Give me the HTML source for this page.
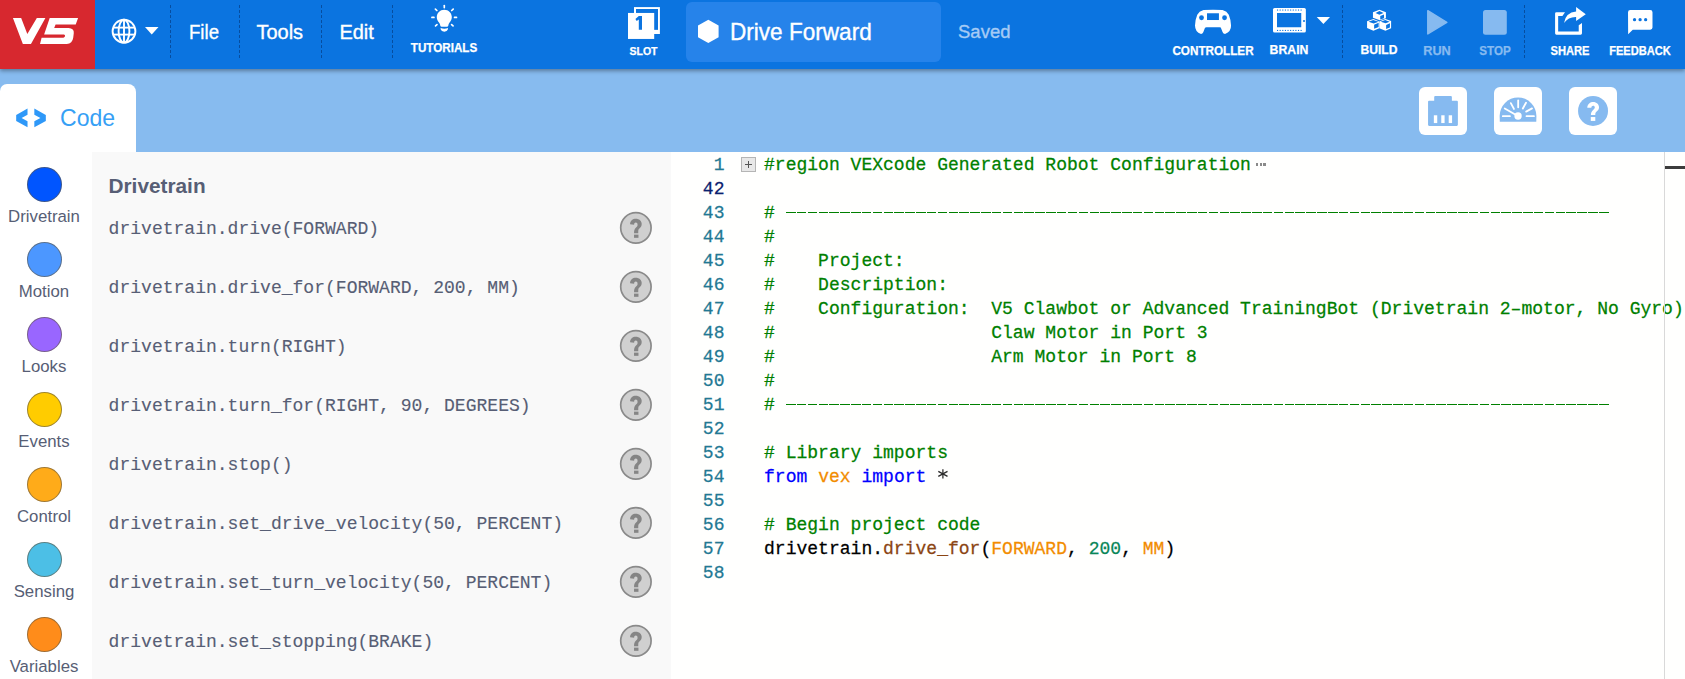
<!DOCTYPE html>
<html><head><meta charset="utf-8"><title>VEXcode V5</title>
<style>
html,body{margin:0;padding:0;width:1685px;height:679px;overflow:hidden;background:#fff;font-family:'Liberation Sans', sans-serif;}
.t{position:absolute;white-space:pre;}
.m{-webkit-text-stroke-width:0.25px;}
.m2{-webkit-text-stroke-width:0.12px;}
.b3{-webkit-text-stroke-width:0.35px;}
.b2{-webkit-text-stroke-width:0.25px;}
</style></head><body>
<div id="topbar" style="position:absolute;left:0;top:0;width:1685px;height:69px;background:#0b74e0;box-shadow:0 2px 4px rgba(0,0,0,0.35);z-index:3">
<div style="position:absolute;left:0;top:0;width:95px;height:69px;background:#d7282f"></div>
<svg style="position:absolute;left:8px;top:12px" width="80" height="38" viewBox="0 0 1429 679"><path fill="#fff" d="M88 105 L235 105 L345 395 L515 105 L668 105 L410 572 L265 572 Z"/><path fill="#fff" d="M745 105 L1252 105 L1210 225 L850 225 L825 285 L1080 285 Q1185 290 1175 380 L1165 460 Q1150 565 1050 572 L572 572 L600 460 L990 460 Q1015 455 1020 430 Q1020 400 1000 400 L645 400 Z"/></svg>
<svg style="position:absolute;left:110px;top:17px" width="30" height="30" viewBox="0 0 30 30"><g fill="none" stroke="#fff" stroke-width="1.9"><circle cx="14.0" cy="14.2" r="11.4"/><ellipse cx="14.0" cy="14.2" rx="5.4" ry="11.4"/><line x1="14.0" y1="2.8" x2="14.0" y2="25.6"/><line x1="3.2" y1="10.6" x2="24.8" y2="10.6"/><line x1="3.2" y1="17.6" x2="24.8" y2="17.6"/></g></svg>
<svg style="position:absolute;left:144px;top:26px" width="16" height="10" viewBox="0 0 16 10"><path fill="#fff" d="M1 1 L14.5 1 L7.75 8.5 Z"/></svg>
<div style="position:absolute;left:170px;top:5px;width:0;height:53px;border-left:1px dashed rgba(0,30,80,0.45)"></div>
<div style="position:absolute;left:238.5px;top:5px;width:0;height:53px;border-left:1px dashed rgba(0,30,80,0.45)"></div>
<div style="position:absolute;left:321px;top:5px;width:0;height:53px;border-left:1px dashed rgba(0,30,80,0.45)"></div>
<div style="position:absolute;left:392px;top:5px;width:0;height:53px;border-left:1px dashed rgba(0,30,80,0.45)"></div>
<div style="position:absolute;left:1342px;top:5px;width:0;height:53px;border-left:1px dashed rgba(0,30,80,0.45)"></div>
<div style="position:absolute;left:1524px;top:5px;width:0;height:53px;border-left:1px dashed rgba(0,30,80,0.45)"></div>
<div class="t b3" style="left:189.30px;top:22.47px;font-size:20px;line-height:20px;color:#fff;font-weight:normal;font-family:'Liberation Sans', sans-serif;transform:scale(0.93,1.03);transform-origin:0 16.93px;">File</div>
<div class="t b3" style="left:256.40px;top:22.47px;font-size:20px;line-height:20px;color:#fff;font-weight:normal;font-family:'Liberation Sans', sans-serif;transform:scale(1,1.03);transform-origin:0 16.93px;">Tools</div>
<div class="t b3" style="left:339.40px;top:22.47px;font-size:20px;line-height:20px;color:#fff;font-weight:normal;font-family:'Liberation Sans', sans-serif;transform:scale(1,1.03);transform-origin:0 16.93px;">Edit</div>
<svg style="position:absolute;left:426px;top:0px" width="36" height="36" viewBox="0 0 679 679"><g fill="#fff"><path d="M345 182 C425 182 487 245 487 322 C487 370 465 400 445 425 C430 445 422 465 420 485 Q415 505 395 505 L295 505 Q275 505 270 485 C268 465 260 445 245 425 C225 400 203 370 203 322 C203 245 265 182 345 182 Z"/><path d="M275 528 Q345 552 415 528 L412 558 Q400 598 345 598 Q290 598 278 558 Z"/></g><g stroke="#fff" stroke-width="32" stroke-linecap="round"><line x1="345" y1="105" x2="345" y2="142"/><line x1="177" y1="172" x2="205" y2="198"/><line x1="513" y1="172" x2="485" y2="198"/><line x1="112" y1="328" x2="150" y2="328"/><line x1="538" y1="328" x2="575" y2="328"/><line x1="180" y1="488" x2="207" y2="465"/><line x1="510" y1="488" x2="483" y2="465"/></g></svg>
<div class="t b2" style="left:444.00px;top:41.74px;font-size:12px;line-height:12px;color:#fff;font-weight:bold;font-family:'Liberation Sans', sans-serif;transform:translateX(-50%) scale(0.97,1);transform-origin:50% 10.16px;">TUTORIALS</div>
<svg style="position:absolute;left:620px;top:0px" width="50" height="45" viewBox="620 0 50 45"><rect x="634" y="7.1" width="25.9" height="26.9" fill="#fff"/><rect x="636" y="9" width="22" height="20.85" fill="#0b74e0"/><rect x="628" y="12.95" width="26.2" height="26" fill="#fff"/><path fill="#0b74e0" d="M638.8 16 L642 16 L642 29.85 L638.8 29.85 L638.8 19.6 L636.7 21.1 L635.4 19 Z"/></svg>
<div class="t b2" style="left:643.50px;top:46.01px;font-size:10.5px;line-height:10.5px;color:#fff;font-weight:bold;font-family:'Liberation Sans', sans-serif;transform:translateX(-50%);transform-origin:50% 8.89px;">SLOT</div>
<div style="position:absolute;left:686px;top:2px;width:255px;height:59.5px;background:#2683ea;border-radius:6px"></div>
<svg style="position:absolute;left:697px;top:19px" width="23" height="25" viewBox="0 0 23 25"><path fill="#fff" d="M11.3 0.8 L21.6 6.5 L21.6 18.3 L11.3 24 L1 18.3 L1 6.5 Z"/></svg>
<div class="t b3" style="left:729.80px;top:21.30px;font-size:22.8px;line-height:22.8px;color:#fff;font-weight:normal;font-family:'Liberation Sans', sans-serif;transform:scale(0.99,1.05);transform-origin:0 19.30px;">Drive Forward</div>
<div class="t b3" style="left:958.00px;top:23.04px;font-size:18.5px;line-height:18.5px;color:#a6cbf5;font-weight:normal;font-family:'Liberation Sans', sans-serif;transform:scale(1,1.03);transform-origin:0 15.66px;">Saved</div>
<svg style="position:absolute;left:1190px;top:4px" width="46" height="34" viewBox="0 0 919 679"><path fill="#fff" d="M270 122 Q460 112 650 122 Q740 150 775 215 Q815 310 820 430 Q825 550 700 600 Q665 600 650 560 L615 470 Q610 462 590 462 L330 462 Q310 462 300 475 L265 565 Q250 600 220 600 Q100 560 100 430 Q105 310 145 215 Q180 150 270 122 Z"/><rect x="340" y="185" width="238" height="135" fill="#0b74e0"/><circle cx="230" cy="275" r="48" fill="#0b74e0"/><circle cx="690" cy="275" r="48" fill="#0b74e0"/></svg>
<div class="t b2" style="left:1213.20px;top:44.64px;font-size:12px;line-height:12px;color:#fff;font-weight:bold;font-family:'Liberation Sans', sans-serif;transform:translateX(-50%) scale(0.975,1);transform-origin:50% 10.16px;">CONTROLLER</div>
<svg style="position:absolute;left:1268px;top:4px" width="68" height="34" viewBox="1268 4 68 34"><rect x="1273" y="7.9" width="32.85" height="24.7" rx="1.6" fill="#fff"/><rect x="1277" y="13" width="24.25" height="14.25" fill="#0b74e0"/><circle cx="1304" cy="20.9" r="1" fill="#0b74e0"/><rect x="1277.00" y="9.5" width="1.1" height="1.1" fill="#0b74e0"/><rect x="1277.00" y="29.9" width="1.1" height="1.1" fill="#0b74e0"/><rect x="1279.62" y="9.5" width="1.1" height="1.1" fill="#0b74e0"/><rect x="1279.62" y="29.9" width="1.1" height="1.1" fill="#0b74e0"/><rect x="1282.24" y="9.5" width="1.1" height="1.1" fill="#0b74e0"/><rect x="1282.24" y="29.9" width="1.1" height="1.1" fill="#0b74e0"/><rect x="1284.86" y="9.5" width="1.1" height="1.1" fill="#0b74e0"/><rect x="1284.86" y="29.9" width="1.1" height="1.1" fill="#0b74e0"/><rect x="1287.48" y="9.5" width="1.1" height="1.1" fill="#0b74e0"/><rect x="1287.48" y="29.9" width="1.1" height="1.1" fill="#0b74e0"/><rect x="1290.10" y="9.5" width="1.1" height="1.1" fill="#0b74e0"/><rect x="1290.10" y="29.9" width="1.1" height="1.1" fill="#0b74e0"/><rect x="1292.72" y="9.5" width="1.1" height="1.1" fill="#0b74e0"/><rect x="1292.72" y="29.9" width="1.1" height="1.1" fill="#0b74e0"/><rect x="1295.34" y="9.5" width="1.1" height="1.1" fill="#0b74e0"/><rect x="1295.34" y="29.9" width="1.1" height="1.1" fill="#0b74e0"/><rect x="1297.96" y="9.5" width="1.1" height="1.1" fill="#0b74e0"/><rect x="1297.96" y="29.9" width="1.1" height="1.1" fill="#0b74e0"/><rect x="1300.58" y="9.5" width="1.1" height="1.1" fill="#0b74e0"/><rect x="1300.58" y="29.9" width="1.1" height="1.1" fill="#0b74e0"/><path fill="#fff" d="M1316.75 17.1 L1330 17.1 L1323.4 24 Z"/></svg>
<div class="t b2" style="left:1289.00px;top:43.84px;font-size:12px;line-height:12px;color:#fff;font-weight:bold;font-family:'Liberation Sans', sans-serif;transform:translateX(-50%) scale(1.02,1);transform-origin:50% 10.16px;">BRAIN</div>
<svg style="position:absolute;left:1360px;top:4px" width="40" height="32" viewBox="0 0 849 679"><g fill="#fff"><path d="M412 120 L550 175 L550 300 L420 345 L275 290 L275 175 Z"/><path d="M285 320 L410 370 L410 515 L285 570 L150 510 L150 365 Z"/><path d="M540 320 L660 360 L660 515 L540 570 L410 515 L410 370 Z"/></g><g fill="#0b74e0"><path d="M412 150 L500 190 L412 230 L330 190 Z"/><path d="M430 255 L510 225 L510 300 L430 330 Z"/><path d="M280 340 L395 378 L290 415 L180 375 Z"/><path d="M300 440 L395 400 L395 490 L300 525 Z"/><path d="M535 340 L630 375 L545 410 L440 375 Z"/><path d="M555 445 L635 410 L635 500 L555 530 Z"/></g></svg>
<div class="t b2" style="left:1378.70px;top:43.84px;font-size:12px;line-height:12px;color:#fff;font-weight:bold;font-family:'Liberation Sans', sans-serif;transform:translateX(-50%) scale(1.01,1);transform-origin:50% 10.16px;">BUILD</div>
<svg style="position:absolute;left:1420px;top:4px" width="95" height="36" viewBox="1420 4 95 36"><path fill="#86baf0" stroke="#86baf0" stroke-width="1.5" stroke-linejoin="round" d="M1427.8 10.7 L1446.8 22.3 L1427.8 33.9 Z"/><rect x="1483" y="9.92" width="23.8" height="24.8" rx="2.5" fill="#86baf0"/></svg>
<div class="t b2" style="left:1436.90px;top:44.84px;font-size:12px;line-height:12px;color:#86baf0;font-weight:bold;font-family:'Liberation Sans', sans-serif;transform:translateX(-50%) scale(1.06,1);transform-origin:50% 10.16px;">RUN</div>
<div class="t b2" style="left:1495.00px;top:44.84px;font-size:12px;line-height:12px;color:#86baf0;font-weight:bold;font-family:'Liberation Sans', sans-serif;transform:translateX(-50%) scale(0.97,1);transform-origin:50% 10.16px;">STOP</div>
<svg style="position:absolute;left:1550px;top:2px" width="110" height="36" viewBox="0 0 1685 551"><path fill="#fff" d="M78 175 Q78 155 98 155 L230 155 L190 215 L125 215 L125 450 L440 450 L440 355 L490 320 L490 480 Q490 500 470 500 L98 500 Q78 500 78 480 Z"/><path fill="#fff" d="M215 320 Q240 160 400 145 L400 75 L548 188 L400 292 L400 228 Q280 225 215 320 Z"/><path fill="#fff" d="M1230 122 L1535 122 Q1570 122 1570 157 L1570 392 Q1570 425 1535 425 L1268 425 L1197 492 L1195 157 Q1195 122 1230 122 Z"/><circle cx="1295" cy="270" r="25" fill="#0b74e0"/><circle cx="1380" cy="270" r="25" fill="#0b74e0"/><circle cx="1465" cy="270" r="25" fill="#0b74e0"/></svg>
<div class="t b2" style="left:1570.20px;top:44.84px;font-size:12px;line-height:12px;color:#fff;font-weight:bold;font-family:'Liberation Sans', sans-serif;transform:translateX(-50%) scale(0.93,1);transform-origin:50% 10.16px;">SHARE</div>
<div class="t b2" style="left:1640.40px;top:44.84px;font-size:12px;line-height:12px;color:#fff;font-weight:bold;font-family:'Liberation Sans', sans-serif;transform:translateX(-50%) scale(0.925,1);transform-origin:50% 10.16px;">FEEDBACK</div>
</div>
<div id="strip" style="position:absolute;left:0;top:69px;width:1685px;height:83px;background:#87bbef"></div>
<div style="position:absolute;left:0;top:84px;width:136px;height:68px;background:#fff;border-radius:7px 8px 0 0"></div>
<svg style="position:absolute;left:10px;top:100px" width="40" height="35" viewBox="0 0 776 679"><path fill="#2e98f8" d="M340 165 L120 290 L120 405 L340 530 L340 410 L225 348 L340 285 Z"/><path fill="#2e98f8" d="M472 165 L695 290 L695 405 L472 530 L472 410 L590 348 L472 285 Z"/></svg>
<div class="t" style="left:59.50px;top:107.10px;font-size:22.8px;line-height:22.8px;color:#36a0f5;font-weight:normal;font-family:'Liberation Sans', sans-serif;transform:scale(1.01,1.03);transform-origin:0 19.30px;">Code</div>
<div style="position:absolute;left:1419px;top:87px;width:48px;height:48px;background:#fff;border-radius:6px"></div>
<div style="position:absolute;left:1494px;top:87px;width:48px;height:48px;background:#fff;border-radius:6px"></div>
<div style="position:absolute;left:1569px;top:87px;width:48px;height:48px;background:#fff;border-radius:6px"></div>
<svg style="position:absolute;left:1419px;top:87px" width="48" height="48" viewBox="0 0 679 679"><path fill="#86baf0" d="M230 128 L450 128 Q465 128 465 143 L465 195 L535 195 Q550 195 550 210 L550 535 Q550 550 535 550 L143 550 Q128 550 128 535 L128 210 Q128 195 143 195 L215 195 L215 143 Q215 128 230 128 Z"/><g fill="#fff"><rect x="210" y="400" width="48" height="110"/><rect x="315" y="400" width="47" height="110"/><rect x="420" y="400" width="48" height="110"/></g></svg>
<svg style="position:absolute;left:1494px;top:87px" width="48" height="48" viewBox="0 0 679 679"><path fill="#86baf0" d="M82 492 L80 410 A260 262 0 0 1 600 410 L598 492 Z"/><g stroke="#fff" stroke-width="26" stroke-linecap="round"><line x1="342" y1="190" x2="342" y2="288"/><line x1="238" y1="228" x2="282" y2="310"/><line x1="453" y1="222" x2="408" y2="305"/><line x1="538" y1="302" x2="455" y2="348"/><line x1="125" y1="412" x2="225" y2="412"/><line x1="460" y1="412" x2="565" y2="412"/><line x1="152" y1="305" x2="300" y2="390"/></g><circle cx="340" cy="410" r="52" fill="#fff"/></svg>
<svg style="position:absolute;left:1569px;top:87px" width="48" height="48" viewBox="0 0 679 679"><circle cx="340" cy="338" r="212" fill="#86baf0"/><path fill="#fff" d="M258 292 C262 240 300 212 342 212 C390 212 425 245 425 288 C425 325 400 340 385 352 C375 360 372 370 372 395 L310 395 C310 365 318 345 345 322 C360 308 365 300 365 288 C365 275 355 265 342 265 C328 265 318 275 316 292 Z"/><rect x="308" y="425" width="64" height="55" fill="#fff"/></svg>
<div id="cats" style="position:absolute;left:0;top:152px;width:92px;height:527px;background:#fff"></div>
<div style="position:absolute;left:27px;top:167.0px;width:33px;height:33px;border-radius:50%;background:#0055ff;border:1px solid rgba(95,85,65,0.6)"></div>
<div class="t" style="left:44.00px;top:208.98px;font-size:16.8px;line-height:16.8px;color:#575e75;font-weight:normal;font-family:'Liberation Sans', sans-serif;transform:translateX(-50%);transform-origin:50% 14.22px;">Drivetrain</div>
<div style="position:absolute;left:27px;top:242.0px;width:33px;height:33px;border-radius:50%;background:#4c97ff;border:1px solid rgba(95,85,65,0.6)"></div>
<div class="t" style="left:44.00px;top:283.98px;font-size:16.8px;line-height:16.8px;color:#575e75;font-weight:normal;font-family:'Liberation Sans', sans-serif;transform:translateX(-50%);transform-origin:50% 14.22px;">Motion</div>
<div style="position:absolute;left:27px;top:317.0px;width:33px;height:33px;border-radius:50%;background:#9966ff;border:1px solid rgba(95,85,65,0.6)"></div>
<div class="t" style="left:44.00px;top:358.98px;font-size:16.8px;line-height:16.8px;color:#575e75;font-weight:normal;font-family:'Liberation Sans', sans-serif;transform:translateX(-50%);transform-origin:50% 14.22px;">Looks</div>
<div style="position:absolute;left:27px;top:392.0px;width:33px;height:33px;border-radius:50%;background:#ffcc00;border:1px solid rgba(95,85,65,0.6)"></div>
<div class="t" style="left:44.00px;top:433.98px;font-size:16.8px;line-height:16.8px;color:#575e75;font-weight:normal;font-family:'Liberation Sans', sans-serif;transform:translateX(-50%);transform-origin:50% 14.22px;">Events</div>
<div style="position:absolute;left:27px;top:467.0px;width:33px;height:33px;border-radius:50%;background:#ffab19;border:1px solid rgba(95,85,65,0.6)"></div>
<div class="t" style="left:44.00px;top:508.98px;font-size:16.8px;line-height:16.8px;color:#575e75;font-weight:normal;font-family:'Liberation Sans', sans-serif;transform:translateX(-50%);transform-origin:50% 14.22px;">Control</div>
<div style="position:absolute;left:27px;top:542.0px;width:33px;height:33px;border-radius:50%;background:#4cbfe6;border:1px solid rgba(95,85,65,0.6)"></div>
<div class="t" style="left:44.00px;top:583.98px;font-size:16.8px;line-height:16.8px;color:#575e75;font-weight:normal;font-family:'Liberation Sans', sans-serif;transform:translateX(-50%);transform-origin:50% 14.22px;">Sensing</div>
<div style="position:absolute;left:27px;top:617.0px;width:33px;height:33px;border-radius:50%;background:#ff8c1a;border:1px solid rgba(95,85,65,0.6)"></div>
<div class="t" style="left:44.00px;top:658.98px;font-size:16.8px;line-height:16.8px;color:#575e75;font-weight:normal;font-family:'Liberation Sans', sans-serif;transform:translateX(-50%);transform-origin:50% 14.22px;">Variables</div>
<div id="palette" style="position:absolute;left:92px;top:152px;width:579px;height:527px;background:#f9f9f9"></div>
<div class="t" style="left:108.50px;top:175.69px;font-size:20.8px;line-height:20.8px;color:#575e75;font-weight:bold;font-family:'Liberation Sans', sans-serif;">Drivetrain</div>
<div class="t m2" style="left:108.60px;top:219.77px;font-size:18.04px;line-height:18.04px;color:#575e75;font-weight:normal;font-family:'Liberation Mono', monospace;transform:scale(1,1.06);transform-origin:0 13.83px;">drivetrain.drive(FORWARD)</div>
<svg style="position:absolute;left:615px;top:207px" width="42" height="42" viewBox="0 0 42 42"><circle cx="20.9" cy="20.85" r="15.2" fill="#d0d0d0" stroke="#8a8a8a" stroke-width="1.7"/></svg>
<svg style="position:absolute;left:600px;top:200px" width="80" height="60" viewBox="0 0 905 679"><path fill="#858585" d="M340 275 C340 235 370 213 405 213 C442 213 472 238 472 272 C472 305 450 318 438 330 C433 336 433 345 433 375 L385 375 C385 345 390 330 405 315 C418 303 425 295 425 280 C425 265 417 255 405 255 C393 255 386 263 386 280 Z"/><rect x="385" y="392" width="50" height="36" fill="#858585"/></svg>
<div class="t m2" style="left:108.60px;top:278.77px;font-size:18.04px;line-height:18.04px;color:#575e75;font-weight:normal;font-family:'Liberation Mono', monospace;transform:scale(1,1.06);transform-origin:0 13.83px;">drivetrain.drive_for(FORWARD, 200, MM)</div>
<svg style="position:absolute;left:615px;top:266px" width="42" height="42" viewBox="0 0 42 42"><circle cx="20.9" cy="20.85" r="15.2" fill="#d0d0d0" stroke="#8a8a8a" stroke-width="1.7"/></svg>
<svg style="position:absolute;left:600px;top:259px" width="80" height="60" viewBox="0 0 905 679"><path fill="#858585" d="M340 275 C340 235 370 213 405 213 C442 213 472 238 472 272 C472 305 450 318 438 330 C433 336 433 345 433 375 L385 375 C385 345 390 330 405 315 C418 303 425 295 425 280 C425 265 417 255 405 255 C393 255 386 263 386 280 Z"/><rect x="385" y="392" width="50" height="36" fill="#858585"/></svg>
<div class="t m2" style="left:108.60px;top:337.77px;font-size:18.04px;line-height:18.04px;color:#575e75;font-weight:normal;font-family:'Liberation Mono', monospace;transform:scale(1,1.06);transform-origin:0 13.83px;">drivetrain.turn(RIGHT)</div>
<svg style="position:absolute;left:615px;top:325px" width="42" height="42" viewBox="0 0 42 42"><circle cx="20.9" cy="20.85" r="15.2" fill="#d0d0d0" stroke="#8a8a8a" stroke-width="1.7"/></svg>
<svg style="position:absolute;left:600px;top:318px" width="80" height="60" viewBox="0 0 905 679"><path fill="#858585" d="M340 275 C340 235 370 213 405 213 C442 213 472 238 472 272 C472 305 450 318 438 330 C433 336 433 345 433 375 L385 375 C385 345 390 330 405 315 C418 303 425 295 425 280 C425 265 417 255 405 255 C393 255 386 263 386 280 Z"/><rect x="385" y="392" width="50" height="36" fill="#858585"/></svg>
<div class="t m2" style="left:108.60px;top:396.77px;font-size:18.04px;line-height:18.04px;color:#575e75;font-weight:normal;font-family:'Liberation Mono', monospace;transform:scale(1,1.06);transform-origin:0 13.83px;">drivetrain.turn_for(RIGHT, 90, DEGREES)</div>
<svg style="position:absolute;left:615px;top:384px" width="42" height="42" viewBox="0 0 42 42"><circle cx="20.9" cy="20.85" r="15.2" fill="#d0d0d0" stroke="#8a8a8a" stroke-width="1.7"/></svg>
<svg style="position:absolute;left:600px;top:377px" width="80" height="60" viewBox="0 0 905 679"><path fill="#858585" d="M340 275 C340 235 370 213 405 213 C442 213 472 238 472 272 C472 305 450 318 438 330 C433 336 433 345 433 375 L385 375 C385 345 390 330 405 315 C418 303 425 295 425 280 C425 265 417 255 405 255 C393 255 386 263 386 280 Z"/><rect x="385" y="392" width="50" height="36" fill="#858585"/></svg>
<div class="t m2" style="left:108.60px;top:455.77px;font-size:18.04px;line-height:18.04px;color:#575e75;font-weight:normal;font-family:'Liberation Mono', monospace;transform:scale(1,1.06);transform-origin:0 13.83px;">drivetrain.stop()</div>
<svg style="position:absolute;left:615px;top:443px" width="42" height="42" viewBox="0 0 42 42"><circle cx="20.9" cy="20.85" r="15.2" fill="#d0d0d0" stroke="#8a8a8a" stroke-width="1.7"/></svg>
<svg style="position:absolute;left:600px;top:436px" width="80" height="60" viewBox="0 0 905 679"><path fill="#858585" d="M340 275 C340 235 370 213 405 213 C442 213 472 238 472 272 C472 305 450 318 438 330 C433 336 433 345 433 375 L385 375 C385 345 390 330 405 315 C418 303 425 295 425 280 C425 265 417 255 405 255 C393 255 386 263 386 280 Z"/><rect x="385" y="392" width="50" height="36" fill="#858585"/></svg>
<div class="t m2" style="left:108.60px;top:514.77px;font-size:18.04px;line-height:18.04px;color:#575e75;font-weight:normal;font-family:'Liberation Mono', monospace;transform:scale(1,1.06);transform-origin:0 13.83px;">drivetrain.set_drive_velocity(50, PERCENT)</div>
<svg style="position:absolute;left:615px;top:502px" width="42" height="42" viewBox="0 0 42 42"><circle cx="20.9" cy="20.85" r="15.2" fill="#d0d0d0" stroke="#8a8a8a" stroke-width="1.7"/></svg>
<svg style="position:absolute;left:600px;top:495px" width="80" height="60" viewBox="0 0 905 679"><path fill="#858585" d="M340 275 C340 235 370 213 405 213 C442 213 472 238 472 272 C472 305 450 318 438 330 C433 336 433 345 433 375 L385 375 C385 345 390 330 405 315 C418 303 425 295 425 280 C425 265 417 255 405 255 C393 255 386 263 386 280 Z"/><rect x="385" y="392" width="50" height="36" fill="#858585"/></svg>
<div class="t m2" style="left:108.60px;top:573.77px;font-size:18.04px;line-height:18.04px;color:#575e75;font-weight:normal;font-family:'Liberation Mono', monospace;transform:scale(1,1.06);transform-origin:0 13.83px;">drivetrain.set_turn_velocity(50, PERCENT)</div>
<svg style="position:absolute;left:615px;top:561px" width="42" height="42" viewBox="0 0 42 42"><circle cx="20.9" cy="20.85" r="15.2" fill="#d0d0d0" stroke="#8a8a8a" stroke-width="1.7"/></svg>
<svg style="position:absolute;left:600px;top:554px" width="80" height="60" viewBox="0 0 905 679"><path fill="#858585" d="M340 275 C340 235 370 213 405 213 C442 213 472 238 472 272 C472 305 450 318 438 330 C433 336 433 345 433 375 L385 375 C385 345 390 330 405 315 C418 303 425 295 425 280 C425 265 417 255 405 255 C393 255 386 263 386 280 Z"/><rect x="385" y="392" width="50" height="36" fill="#858585"/></svg>
<div class="t m2" style="left:108.60px;top:632.77px;font-size:18.04px;line-height:18.04px;color:#575e75;font-weight:normal;font-family:'Liberation Mono', monospace;transform:scale(1,1.06);transform-origin:0 13.83px;">drivetrain.set_stopping(BRAKE)</div>
<svg style="position:absolute;left:615px;top:620px" width="42" height="42" viewBox="0 0 42 42"><circle cx="20.9" cy="20.85" r="15.2" fill="#d0d0d0" stroke="#8a8a8a" stroke-width="1.7"/></svg>
<svg style="position:absolute;left:600px;top:613px" width="80" height="60" viewBox="0 0 905 679"><path fill="#858585" d="M340 275 C340 235 370 213 405 213 C442 213 472 238 472 272 C472 305 450 318 438 330 C433 336 433 345 433 375 L385 375 C385 345 390 330 405 315 C418 303 425 295 425 280 C425 265 417 255 405 255 C393 255 386 263 386 280 Z"/><rect x="385" y="392" width="50" height="36" fill="#858585"/></svg>
<div id="editor" style="position:absolute;left:671px;top:152px;width:1014px;height:527px;background:#fffffe"></div>
<div class="t m" style="left:0.00px;top:155.97px;font-size:18.04px;line-height:18.04px;color:#237893;font-weight:normal;font-family:'Liberation Mono', monospace;transform:scale(1,1.04);transform-origin:0 13.83px;width:724.5px;text-align:right;">1</div>
<div class="t m" style="left:764.00px;top:155.97px;font-size:18.04px;line-height:18.04px;color:#000;font-weight:normal;font-family:'Liberation Mono', monospace;transform:scale(1,1.04);transform-origin:0 13.83px;"><span style="color:#008000">#region VEXcode Generated Robot Configuration</span></div>
<div class="t m" style="left:0.00px;top:179.97px;font-size:18.04px;line-height:18.04px;color:#0b216f;font-weight:normal;font-family:'Liberation Mono', monospace;transform:scale(1,1.04);transform-origin:0 13.83px;width:724.5px;text-align:right;">42</div>
<div class="t m" style="left:0.00px;top:203.97px;font-size:18.04px;line-height:18.04px;color:#237893;font-weight:normal;font-family:'Liberation Mono', monospace;transform:scale(1,1.04);transform-origin:0 13.83px;width:724.5px;text-align:right;">43</div>
<div class="t m" style="left:764.00px;top:203.97px;font-size:18.04px;line-height:18.04px;color:#000;font-weight:normal;font-family:'Liberation Mono', monospace;transform:scale(1,1.04);transform-origin:0 13.83px;"><span style="color:#008000">#</span></div>
<div class="t m" style="left:0.00px;top:227.97px;font-size:18.04px;line-height:18.04px;color:#237893;font-weight:normal;font-family:'Liberation Mono', monospace;transform:scale(1,1.04);transform-origin:0 13.83px;width:724.5px;text-align:right;">44</div>
<div class="t m" style="left:764.00px;top:227.97px;font-size:18.04px;line-height:18.04px;color:#000;font-weight:normal;font-family:'Liberation Mono', monospace;transform:scale(1,1.04);transform-origin:0 13.83px;"><span style="color:#008000">#</span></div>
<div class="t m" style="left:0.00px;top:251.97px;font-size:18.04px;line-height:18.04px;color:#237893;font-weight:normal;font-family:'Liberation Mono', monospace;transform:scale(1,1.04);transform-origin:0 13.83px;width:724.5px;text-align:right;">45</div>
<div class="t m" style="left:764.00px;top:251.97px;font-size:18.04px;line-height:18.04px;color:#000;font-weight:normal;font-family:'Liberation Mono', monospace;transform:scale(1,1.04);transform-origin:0 13.83px;"><span style="color:#008000">#    Project:</span></div>
<div class="t m" style="left:0.00px;top:275.97px;font-size:18.04px;line-height:18.04px;color:#237893;font-weight:normal;font-family:'Liberation Mono', monospace;transform:scale(1,1.04);transform-origin:0 13.83px;width:724.5px;text-align:right;">46</div>
<div class="t m" style="left:764.00px;top:275.97px;font-size:18.04px;line-height:18.04px;color:#000;font-weight:normal;font-family:'Liberation Mono', monospace;transform:scale(1,1.04);transform-origin:0 13.83px;"><span style="color:#008000">#    Description:</span></div>
<div class="t m" style="left:0.00px;top:299.97px;font-size:18.04px;line-height:18.04px;color:#237893;font-weight:normal;font-family:'Liberation Mono', monospace;transform:scale(1,1.04);transform-origin:0 13.83px;width:724.5px;text-align:right;">47</div>
<div class="t m" style="left:764.00px;top:299.97px;font-size:18.04px;line-height:18.04px;color:#000;font-weight:normal;font-family:'Liberation Mono', monospace;transform:scale(1,1.04);transform-origin:0 13.83px;"><span style="color:#008000">#    Configuration:  V5 Clawbot or Advanced TrainingBot (Drivetrain 2–motor, No Gyro)</span></div>
<div class="t m" style="left:0.00px;top:323.97px;font-size:18.04px;line-height:18.04px;color:#237893;font-weight:normal;font-family:'Liberation Mono', monospace;transform:scale(1,1.04);transform-origin:0 13.83px;width:724.5px;text-align:right;">48</div>
<div class="t m" style="left:764.00px;top:323.97px;font-size:18.04px;line-height:18.04px;color:#000;font-weight:normal;font-family:'Liberation Mono', monospace;transform:scale(1,1.04);transform-origin:0 13.83px;"><span style="color:#008000">#                    Claw Motor in Port 3</span></div>
<div class="t m" style="left:0.00px;top:347.97px;font-size:18.04px;line-height:18.04px;color:#237893;font-weight:normal;font-family:'Liberation Mono', monospace;transform:scale(1,1.04);transform-origin:0 13.83px;width:724.5px;text-align:right;">49</div>
<div class="t m" style="left:764.00px;top:347.97px;font-size:18.04px;line-height:18.04px;color:#000;font-weight:normal;font-family:'Liberation Mono', monospace;transform:scale(1,1.04);transform-origin:0 13.83px;"><span style="color:#008000">#                    Arm Motor in Port 8</span></div>
<div class="t m" style="left:0.00px;top:371.97px;font-size:18.04px;line-height:18.04px;color:#237893;font-weight:normal;font-family:'Liberation Mono', monospace;transform:scale(1,1.04);transform-origin:0 13.83px;width:724.5px;text-align:right;">50</div>
<div class="t m" style="left:764.00px;top:371.97px;font-size:18.04px;line-height:18.04px;color:#000;font-weight:normal;font-family:'Liberation Mono', monospace;transform:scale(1,1.04);transform-origin:0 13.83px;"><span style="color:#008000">#</span></div>
<div class="t m" style="left:0.00px;top:395.97px;font-size:18.04px;line-height:18.04px;color:#237893;font-weight:normal;font-family:'Liberation Mono', monospace;transform:scale(1,1.04);transform-origin:0 13.83px;width:724.5px;text-align:right;">51</div>
<div class="t m" style="left:764.00px;top:395.97px;font-size:18.04px;line-height:18.04px;color:#000;font-weight:normal;font-family:'Liberation Mono', monospace;transform:scale(1,1.04);transform-origin:0 13.83px;"><span style="color:#008000">#</span></div>
<div class="t m" style="left:0.00px;top:419.97px;font-size:18.04px;line-height:18.04px;color:#237893;font-weight:normal;font-family:'Liberation Mono', monospace;transform:scale(1,1.04);transform-origin:0 13.83px;width:724.5px;text-align:right;">52</div>
<div class="t m" style="left:0.00px;top:443.97px;font-size:18.04px;line-height:18.04px;color:#237893;font-weight:normal;font-family:'Liberation Mono', monospace;transform:scale(1,1.04);transform-origin:0 13.83px;width:724.5px;text-align:right;">53</div>
<div class="t m" style="left:764.00px;top:443.97px;font-size:18.04px;line-height:18.04px;color:#000;font-weight:normal;font-family:'Liberation Mono', monospace;transform:scale(1,1.04);transform-origin:0 13.83px;"><span style="color:#008000"># Library imports</span></div>
<div class="t m" style="left:0.00px;top:467.97px;font-size:18.04px;line-height:18.04px;color:#237893;font-weight:normal;font-family:'Liberation Mono', monospace;transform:scale(1,1.04);transform-origin:0 13.83px;width:724.5px;text-align:right;">54</div>
<div class="t m" style="left:764.00px;top:467.97px;font-size:18.04px;line-height:18.04px;color:#000;font-weight:normal;font-family:'Liberation Mono', monospace;transform:scale(1,1.04);transform-origin:0 13.83px;"><span style="color:#0000ff">from</span><span style="color:#000"> </span><span style="color:#f28c00">vex</span><span style="color:#000"> </span><span style="color:#0000ff">import</span></div>
<div class="t m" style="left:0.00px;top:491.97px;font-size:18.04px;line-height:18.04px;color:#237893;font-weight:normal;font-family:'Liberation Mono', monospace;transform:scale(1,1.04);transform-origin:0 13.83px;width:724.5px;text-align:right;">55</div>
<div class="t m" style="left:0.00px;top:515.97px;font-size:18.04px;line-height:18.04px;color:#237893;font-weight:normal;font-family:'Liberation Mono', monospace;transform:scale(1,1.04);transform-origin:0 13.83px;width:724.5px;text-align:right;">56</div>
<div class="t m" style="left:764.00px;top:515.97px;font-size:18.04px;line-height:18.04px;color:#000;font-weight:normal;font-family:'Liberation Mono', monospace;transform:scale(1,1.04);transform-origin:0 13.83px;"><span style="color:#008000"># Begin project code</span></div>
<div class="t m" style="left:0.00px;top:539.97px;font-size:18.04px;line-height:18.04px;color:#237893;font-weight:normal;font-family:'Liberation Mono', monospace;transform:scale(1,1.04);transform-origin:0 13.83px;width:724.5px;text-align:right;">57</div>
<div class="t m" style="left:764.00px;top:539.97px;font-size:18.04px;line-height:18.04px;color:#000;font-weight:normal;font-family:'Liberation Mono', monospace;transform:scale(1,1.04);transform-origin:0 13.83px;"><span style="color:#000">drivetrain.</span><span style="color:#8b4513">drive_for</span><span style="color:#000">(</span><span style="color:#f28c00">FORWARD</span><span style="color:#000">, </span><span style="color:#098658">200</span><span style="color:#000">, </span><span style="color:#f28c00">MM</span><span style="color:#000">)</span></div>
<div class="t m" style="left:0.00px;top:563.97px;font-size:18.04px;line-height:18.04px;color:#237893;font-weight:normal;font-family:'Liberation Mono', monospace;transform:scale(1,1.04);transform-origin:0 13.83px;width:724.5px;text-align:right;">58</div>
<div style="position:absolute;left:786.4px;top:211.7px;width:822.3px;height:1.6px;background:repeating-linear-gradient(90deg,#008000 0 9.5px,transparent 9.5px 10.84px)"></div>
<div style="position:absolute;left:786.4px;top:403.7px;width:822.3px;height:1.6px;background:repeating-linear-gradient(90deg,#008000 0 9.5px,transparent 9.5px 10.84px)"></div>
<svg style="position:absolute;left:930px;top:462px" width="26" height="24" viewBox="930 462 26 24"><g stroke="#2a2a2a" stroke-width="1.25" stroke-linecap="butt"><line x1="942.9" y1="469.3" x2="942.9" y2="478.6"/><line x1="938.3" y1="471.4" x2="947.5" y2="476.4"/><line x1="938.3" y1="476.4" x2="947.5" y2="471.4"/></g></svg>
<div style="position:absolute;left:741px;top:157px;width:13px;height:13px;background:#e8e8e8;border:1px solid #b5b5b5"></div>
<div style="position:absolute;left:744.9px;top:164px;width:7.1px;height:1px;background:#555"></div>
<div style="position:absolute;left:748px;top:160.8px;width:1px;height:7px;background:#555"></div>
<div style="position:absolute;left:1255.8px;top:163.2px;width:2.6px;height:2.8px;background:#8a8a8a"></div>
<div style="position:absolute;left:1259.6px;top:163.2px;width:2.6px;height:2.8px;background:#8a8a8a"></div>
<div style="position:absolute;left:1263.4px;top:163.2px;width:2.6px;height:2.8px;background:#8a8a8a"></div>
<div style="position:absolute;left:1664px;top:152px;width:1px;height:527px;background:#d9d9d9"></div>
<div style="position:absolute;left:1665px;top:166px;width:20px;height:3px;background:#3c3c3c"></div>
</body></html>
